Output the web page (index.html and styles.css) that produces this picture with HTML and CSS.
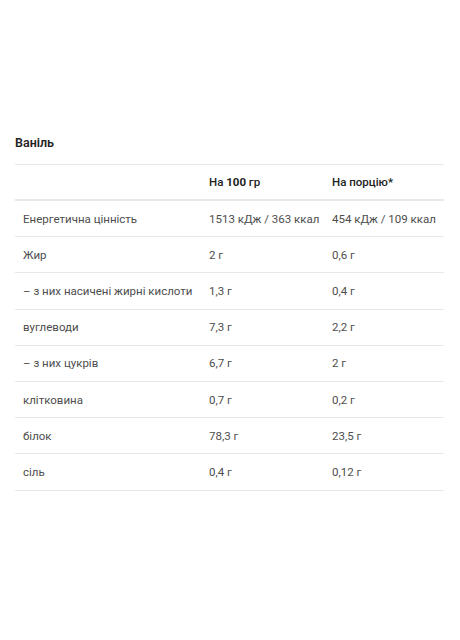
FILE: index.html
```html
<!DOCTYPE html>
<html lang="uk">
<head>
<meta charset="utf-8">
<link rel="stylesheet" href="styles.css">
</head>
<body>
<div class="wrap">
  <h3 class="title">Ваніль</h3>
  <div class="table">
    <div class="row head">
      <div class="cell"></div>
      <div class="cell">На <b class="num">100</b> гр</div>
      <div class="cell">На порцію*</div>
    </div>
    <div class="row"><div class="cell">Енергетична цінність</div><div class="cell">1513 кДж / 363 ккал</div><div class="cell">454 кДж / 109 ккал</div></div>
    <div class="row"><div class="cell">Жир</div><div class="cell">2 г</div><div class="cell">0,6 г</div></div>
    <div class="row"><div class="cell">– з них насичені жирні кислоти</div><div class="cell">1,3 г</div><div class="cell">0,4 г</div></div>
    <div class="row"><div class="cell">вуглеводи</div><div class="cell">7,3 г</div><div class="cell">2,2 г</div></div>
    <div class="row"><div class="cell">– з них цукрів</div><div class="cell">6,7 г</div><div class="cell">2 г</div></div>
    <div class="row"><div class="cell">клітковина</div><div class="cell">0,7 г</div><div class="cell">0,2 г</div></div>
    <div class="row"><div class="cell">білок</div><div class="cell">78,3 г</div><div class="cell">23,5 г</div></div>
    <div class="row"><div class="cell">сіль</div><div class="cell">0,4 г</div><div class="cell">0,12 г</div></div>
  </div>
</div>
</body>
</html>
```

FILE: styles.css
```css
html, body {
  margin: 0;
  padding: 0;
  background: #ffffff;
}
body {
  font-family: Roboto, "Noto Sans", "DejaVu Sans", sans-serif;
  color: #4d4d4d;
}
.wrap {
  padding: 135px 16px 0 15px;
}
.title {
  margin: 0 0 13px 0;
  font-size: 12.5px;
  line-height: 16px;
  font-weight: 600;
  color: #222222;
}
.table {
  border-top: 1px solid #e8e8e8;
}
.row {
  display: grid;
  grid-template-columns: 186px 123px 1fr;
  height: 36.2px;
  box-sizing: border-box;
  border-bottom: 1px solid #e8e8e8;
  align-items: center;
  font-size: 11.5px;
  line-height: 16px;
}
.row.head {
  height: 36px;
  border-bottom: 2px solid #e8e8e8;
  font-weight: 500;
  color: #222222;
}
.num {
  font-weight: 700;
}
.cell {
  padding-left: 8px;
  white-space: nowrap;
}
```
